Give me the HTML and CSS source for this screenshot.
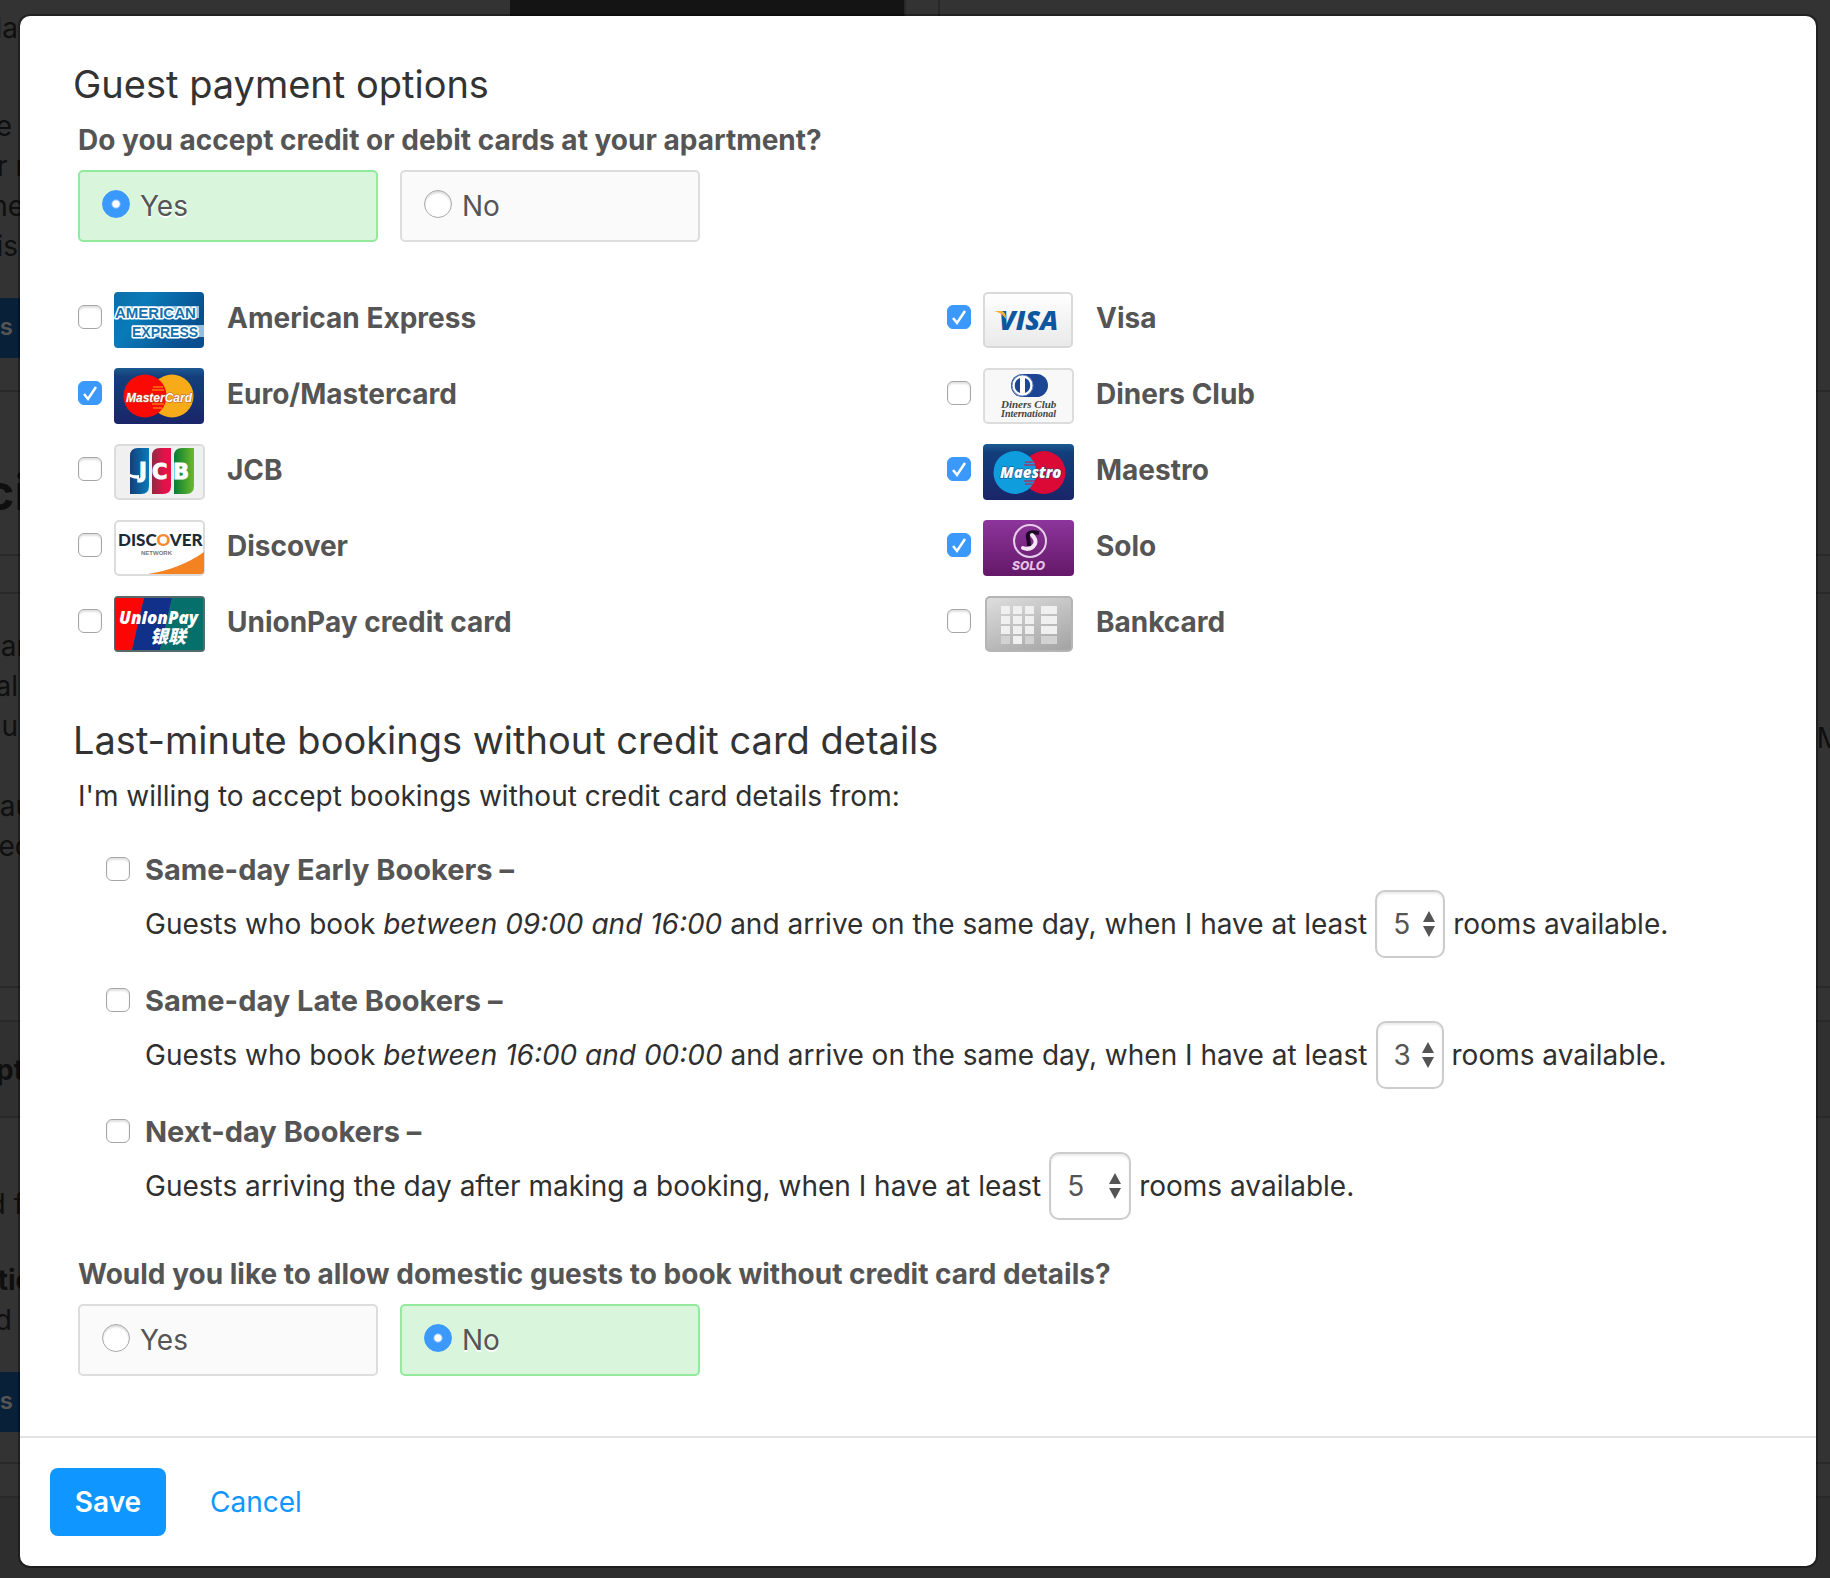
FILE: index.html
```html
<!DOCTYPE html>
<html lang="en">
<head>
<meta charset="utf-8">
<title>Guest payment options</title>
<link rel="stylesheet" href="styles.css">
</head>
<body>
<div class="page">
  <div class="backdrop" aria-hidden="true">
    <div class="topbar"></div>
    <div class="columns">
      <div class="column column-left"></div>
      <div class="column column-right"></div>
    </div>
    <div class="bands">
      <div class="band band-intro">
        <p class="peek peek-first">la</p>
        <p class="peek peek-end">e</p>
        <p class="peek peek-wide">r n</p>
        <p class="peek peek-far">ne</p>
        <p class="peek">is</p>
        <span class="peek-button">s</span>
      </div>
      <div class="band band-title"><p class="peek peek-large">ci</p></div>
      <div class="band band-gap"></div>
      <div class="band band-text">
        <p class="peek peek-widest">am</p>
        <p class="peek">al</p>
        <p class="peek peek-inset">u</p>
        <p class="peek peek-wide peek-para">au</p>
        <p class="peek peek-wide">ed</p>
        <span class="peek-right">M</span>
      </div>
      <div class="band band-gap-small"></div>
      <div class="band band-subtitle"><p class="peek peek-bold">pt</p></div>
      <div class="band band-form">
        <p class="peek peek-far">d f</p>
        <p class="peek peek-wide peek-option">tic</p>
        <p class="peek peek-end">d</p>
        <span class="peek-button">s</span>
      </div>
      <div class="band band-gap-small"></div>
      <div class="band band-last"></div>
    </div>
  </div>

  <form class="modal" role="dialog" aria-labelledby="dialog-title">
    <div class="modal-body">
      <h1 class="heading" id="dialog-title">Guest payment options</h1>
      <fieldset class="choice choice-accept">
        <legend class="question">Do you accept credit or debit cards at your apartment?</legend>
        <div class="choice-row">
          <label class="choice-box"><input class="radio" type="radio" name="accept" checked>Yes</label>
          <label class="choice-box"><input class="radio" type="radio" name="accept">No</label>
        </div>
      </fieldset>

      <div class="cards">
        <label class="card"><input class="check" type="checkbox">
          <svg class="card-logo" viewBox="0 0 90 56" aria-hidden="true">
            <defs><linearGradient id="amex" x1="0" y1="0" x2="1" y2="0.4"><stop offset="0" stop-color="#0d6fa8"/><stop offset=".35" stop-color="#0a7ab8"/><stop offset="1" stop-color="#074f8f"/></linearGradient></defs>
            <rect width="90" height="56" rx="4" fill="url(#amex)"/>
            <path d="M5 14h80v12H1z M18 33h72v12H18z" fill="#8fc1de"/>
            <g font-family="Liberation Sans" font-weight="700" font-size="15" fill="#1672ad" stroke="#fff" stroke-width="3" stroke-linejoin="round" paint-order="stroke"><text x="1" y="26">AMERICAN</text><text x="18" y="45" font-size="14">EXPRESS</text></g>
          </svg><span>American Express</span></label>
        <label class="card"><input class="check" type="checkbox" checked>
          <svg class="card-logo" viewBox="0 0 90 56" aria-hidden="true">
            <defs><linearGradient id="visa" x2="0" y2="1"><stop stop-color="#fff"/><stop offset="1" stop-color="#e9e9e9"/></linearGradient></defs>
            <rect x="1" y="1" width="88" height="54" rx="4" fill="url(#visa)" stroke="#d9d9d9" stroke-width="2"/>
            <text x="16" y="38" font-family="Open Sans" font-weight="800" font-style="italic" font-size="27" fill="#0d56a0">VISA</text>
            <path d="M11 19h8q4 1 4 8q-4-6-12-8z" fill="#f5b335"/>
          </svg><span>Visa</span></label>
        <label class="card"><input class="check" type="checkbox" checked>
          <svg class="card-logo" viewBox="0 0 90 56" aria-hidden="true">
            <defs><linearGradient id="navy" x2="0" y2="1"><stop stop-color="#1d5a92"/><stop offset=".15" stop-color="#123f7c"/><stop offset="1" stop-color="#1a2568"/></linearGradient></defs>
            <rect width="90" height="56" rx="4" fill="url(#navy)"/>
            <circle cx="58" cy="28" r="21.500" fill="#f8ab18"/><circle cx="31" cy="28" r="21.500" fill="#fb0a05"/>
            <path d="M39 19h10M38 22h12M38 36h12M39 40h9" stroke="#f8ab18" stroke-width="1"/>
            <text x="12" y="34" font-family="Liberation Sans" font-weight="700" font-style="italic" font-size="12" fill="#fff" stroke="#b55a38" stroke-width="1" paint-order="stroke">MasterCard</text>
          </svg><span>Euro/Mastercard</span></label>
        <label class="card"><input class="check" type="checkbox">
          <svg class="card-logo" viewBox="0 0 90 56" aria-hidden="true">
            <rect x="1" y="1" width="89" height="54" rx="4" fill="#f8f8f8" stroke="#dcdcdc" stroke-width="2"/>
            <rect x="28" y="6" width="37" height="23" rx="11.500" fill="#1c4594"/>
            <circle cx="39.500" cy="17.500" r="10.500" fill="#fff" stroke="#6e8bc0" stroke-width="1"/>
            <path d="M37 10a8 8 0 0 0 0 15zM42 10a8 8 0 0 1 0 15z" fill="#1c4594"/>
            <g font-family="Liberation Serif" font-style="italic" fill="#444"><text x="18" y="40" font-size="11">Diners Club</text><text x="18" y="49" font-size="10">International</text></g>
          </svg><span>Diners Club</span></label>
        <label class="card"><input class="check" type="checkbox">
          <svg class="card-logo" viewBox="0 0 90 56" aria-hidden="true">
            <defs>
              <linearGradient id="jb"><stop stop-color="#143f7c"/><stop offset="1" stop-color="#087cba"/></linearGradient>
              <linearGradient id="jr"><stop stop-color="#8e2a44"/><stop offset=".7" stop-color="#e8104a"/></linearGradient>
              <linearGradient id="jg"><stop stop-color="#077d33"/><stop offset="1" stop-color="#6dba2c"/></linearGradient>
            </defs>
            <rect x="1" y="1" width="89" height="54" rx="4" fill="#f0f0f0" stroke="#dcdcdc" stroke-width="2"/>
            <path d="M16 12q0-8 8-8h11v38q0 8-8 8H16z" fill="url(#jb)"/>
            <path d="M38 12q0-8 8-8h11v38q0 8-8 8H38z" fill="url(#jr)"/>
            <path d="M60 12q0-8 8-8h12v38q0 8-8 8H60z" fill="url(#jg)"/>
            <g font-family="DejaVu Sans" font-weight="700" font-size="21" fill="#fff" stroke="#fff" stroke-width="1"><text x="25" y="34">J</text><text x="38" y="35">C</text><text x="59" y="35">B</text></g>
            <path d="M16 30q5 2 9 1v4q-5 0-9-2z" fill="#fff"/>
          </svg><span>JCB</span></label>
        <label class="card"><input class="check" type="checkbox" checked>
          <svg class="card-logo" viewBox="0 0 90 56" aria-hidden="true">
            <rect width="91" height="56" rx="4" fill="url(#navy)"/>
            <circle cx="61" cy="28.500" r="21.500" fill="#dc0836"/><circle cx="32" cy="28.500" r="21.500" fill="#109ddd"/>
            <path d="M42 18h8M41 21h11M41 37h11M42 40h8" stroke="#dc0836" stroke-width="1"/>
            <text x="17" y="34" font-family="Open Sans" font-weight="800" font-style="italic" font-size="15" fill="#fff" stroke="#1d4a7a" stroke-width="1" paint-order="stroke">Maestro</text>
          </svg><span>Maestro</span></label>
        <label class="card"><input class="check" type="checkbox">
          <svg class="card-logo" viewBox="0 0 90 56" aria-hidden="true">
            <rect x="1" y="1" width="89" height="54" rx="4" fill="#fff" stroke="#dcdcdc" stroke-width="2"/>
            <path d="M34 54Q66 49 90 32v19q0 3-3 3z" fill="#f58220"/>
            <text x="4" y="26" font-family="Lato" font-weight="900" font-size="17" fill="#1b2b35">DISC<tspan fill="#f58b32">O</tspan>VER</text>
            <text x="27" y="35" font-family="Liberation Sans" font-weight="700" font-size="6" fill="#777">NETWORK</text>
          </svg><span>Discover</span></label>
        <label class="card"><input class="check" type="checkbox" checked>
          <svg class="card-logo" viewBox="0 0 90 56" aria-hidden="true">
            <defs><linearGradient id="solo" x2="0" y2="1"><stop stop-color="#8d359c"/><stop offset="1" stop-color="#641868"/></linearGradient></defs>
            <rect width="91" height="56" rx="4" fill="url(#solo)"/>
            <circle cx="47" cy="21" r="16" fill="none" stroke="#e6cdea" stroke-width="2"/>
            <path d="M56 13q-13-3-11 5q1 4 1 8" fill="none" stroke="#1f0825" stroke-width="4"/>
            <path d="M49 15q5 5 3 9q-4 7-12 4" fill="none" stroke="#f4e6f5" stroke-width="4" stroke-linecap="round"/>
            <text x="29" y="50" font-family="Inter" font-weight="800" font-style="italic" font-size="12" fill="#e3c4e6">SOLO</text>
          </svg><span>Solo</span></label>
        <label class="card"><input class="check" type="checkbox">
          <svg class="card-logo" viewBox="0 0 90 56" aria-hidden="true">
            <clipPath id="upc"><rect x="1" y="1" width="89" height="54" rx="4"/></clipPath>
            <rect width="91" height="56" rx="4" fill="#56696b"/>
            <g clip-path="url(#upc)"><path d="M1 2h29L18 54H1z" fill="#fb0505"/><path d="M30 2h28L46 54H18z" fill="#10308a"/><path d="M58 2h31v52H46z" fill="#046f6b"/></g>
            <text x="5" y="28" font-family="Open Sans" font-weight="800" font-style="italic" font-size="17" fill="#fff">UnionPay</text>
            <text x="36" y="47" font-family="Noto Sans CJK SC" font-weight="900" font-style="italic" font-size="18" fill="#fff">银联</text>
          </svg><span>UnionPay credit card</span></label>
        <label class="card"><input class="check" type="checkbox">
          <svg class="card-logo" viewBox="0 0 90 56" aria-hidden="true">
            <defs><linearGradient id="bank" x1=".2" y1="0" x2=".8" y2="1"><stop stop-color="#dadada"/><stop offset="1" stop-color="#a6a6a6"/></linearGradient></defs>
            <rect x="3" y="1" width="86" height="54" rx="4" fill="url(#bank)" stroke="#b5b5b5" stroke-width="2"/>
            <path d="M18 10h9v8h-9zM30 10h9v8h-9zM42 10h9v8h-9zM58 10h16v8H58zM18 20h9v8h-9zM30 20h9v8h-9zM42 20h9v8h-9zM58 20h16v8H58zM18 30h9v8h-9zM30 30h9v8h-9zM42 30h9v8h-9zM58 30h16v8H58zM30 40h9v8h-9z" fill="#f0f0f0"/>
            <path d="M18 40h9v8h-9zM42 40h9v8h-9zM58 40h16v8H58z" fill="#d2d2d2"/>
          </svg><span>Bankcard</span></label>
      </div>

      <h2 class="heading">Last-minute bookings without credit card details</h2>
      <p class="lead">I'm willing to accept bookings without credit card details from:</p>

      <div class="options">
        <div class="option">
          <label class="option-name"><input class="check" type="checkbox">Same-day Early Bookers –</label>
          <div class="option-text">
            <label for="early">Guests who book <em>between 09:00 and 16:00</em> and arrive on the same day, when I have at least</label>
            <span class="picker"><select class="select select-medium" id="early"><option>5</option></select><svg class="arrows" viewBox="0 0 12 26" aria-hidden="true"><path d="M6 0l6 11H0zM6 26l6-11H0z"/></svg></span>
            <span>rooms available.</span>
          </div>
        </div>
        <div class="option">
          <label class="option-name"><input class="check" type="checkbox">Same-day Late Bookers –</label>
          <div class="option-text">
            <label for="late">Guests who book <em>between 16:00 and 00:00</em> and arrive on the same day, when I have at least</label>
            <span class="picker"><select class="select select-small" id="late"><option>3</option></select><svg class="arrows" viewBox="0 0 12 26" aria-hidden="true"><path d="M6 0l6 11H0zM6 26l6-11H0z"/></svg></span>
            <span>rooms available.</span>
          </div>
        </div>
        <div class="option">
          <label class="option-name"><input class="check" type="checkbox">Next-day Bookers –</label>
          <div class="option-text">
            <label for="next">Guests arriving the day after making a booking, when I have at least</label>
            <span class="picker"><select class="select select-large" id="next"><option>5</option></select><svg class="arrows" viewBox="0 0 12 26" aria-hidden="true"><path d="M6 0l6 11H0zM6 26l6-11H0z"/></svg></span>
            <span>rooms available.</span>
          </div>
        </div>
      </div>

      <fieldset class="choice">
        <legend class="question">Would you like to allow domestic guests to book without credit card details?</legend>
        <div class="choice-row">
          <label class="choice-box"><input class="radio" type="radio" name="domestic">Yes</label>
          <label class="choice-box"><input class="radio" type="radio" name="domestic" checked>No</label>
        </div>
      </fieldset>
    </div>
    <div class="modal-footer">
      <button class="save" type="button">Save</button>
      <a class="cancel" href="#">Cancel</a>
    </div>
  </form>
</div>
</body>
</html>
```
FILE: styles.css
```css
* { box-sizing: border-box; }
body {
  margin: 0;
  background: #333;
  color: #2f2f2f;
  font-family: Inter, "Liberation Sans", sans-serif;
  font-size: 28px;
  line-height: 36px;
}
h1, h2, p, fieldset { margin: 0; padding: 0; border: 0; }
legend { padding: 0; }
.page { position: relative; padding: 16px 14px 12px 20px; }

/* Dimmed page behind the dialog */
.backdrop { position: absolute; inset: 0; overflow: hidden; color: #0f0f0f; }
.columns { position: absolute; inset: 0; display: grid; grid-template-columns: 906px 1fr; gap: 32px; }
.column-left { border-right: 2px solid #282828; }
.column-right { border-left: 2px solid #282828; }
.topbar { position: absolute; left: 510px; top: 0; width: 394px; height: 40px; background: #141414; }
.bands { position: relative; }
.band { position: relative; border-bottom: 2px solid #292929; }
.band-intro { height: 392px; padding-top: 8px; }
.band-title { height: 164px; padding-top: 80px; }
.band-gap { height: 38px; }
.band-text { height: 394px; padding-top: 32px; }
.band-gap-small { height: 34px; }
.band-subtitle { height: 96px; padding-top: 28px; background: #303030; }
.band-form { height: 346px; padding-top: 66px; }
.band-last { height: 90px; background: #2e2e2e; }
.peek { width: 18px; display: flex; justify-content: flex-end; line-height: 40px; white-space: pre; }
.peek-first { margin-bottom: 58px; }
.peek-end { width: 12px; }
.peek-far { width: 24px; }
.peek-wide { width: 32px; }
.peek-widest { width: 41px; }
.peek-inset { width: 18px; }
.peek-para { margin-top: 40px; }
.peek-bold { width: 24px; font-weight: 700; }
.peek-option { margin-top: 36px; font-weight: 700; }
.peek-large { width: 28px; font-size: 50px; font-weight: 700; }
.peek-button { display: flex; justify-content: flex-end; width: 20px; height: 60px; margin-top: 32px; padding-right: 7px; line-height: 58px; font-weight: 600; font-size: 24px; color: #545454; background: #082038; }
.peek-right { position: absolute; right: -12px; top: 126px; }

/* Dialog */
.modal { position: relative; background: #fff; border-radius: 10px; box-shadow: 0 0 0 2px rgba(0, 0, 0, .35); }
.modal-body { padding: 44px 0 60px 58px; }
.heading { margin-left: -5px; font-size: 38px; line-height: 48px; font-weight: 400; color: #333; }
.question { font-weight: 700; color: #555; }
.choice-accept { margin-top: 14px; }
.choice-row { display: flex; gap: 22px; margin-top: 12px; }
.choice-box {
  display: flex; align-items: center; gap: 10px; width: 300px; height: 72px; padding: 0 22px;
  border: 2px solid #ddd; border-radius: 5px; background: #fafafa; color: #555; text-shadow: 0 2px 0 #fff;
}
.choice-box:has(:checked) { border-color: #93e99c; background: #d9f6dc; }
.radio {
  appearance: none; width: 28px; height: 28px; margin: 0 0 4px; border: 1px solid #a9a9a9; border-radius: 50%;
  background: #fff; box-shadow: inset 0 2px 2px rgba(0, 0, 0, .15);
}
.radio:checked { border-color: #3b99fc; background: radial-gradient(circle, #fff 3px, #3b99fc 5px); box-shadow: none; }
.check {
  appearance: none; flex: none; width: 24px; height: 24px; margin: 0; border: 1px solid #a6a6a6; border-radius: 6px;
  background: #fff; box-shadow: inset 0 2px 2px rgba(0, 0, 0, .12);
}
.check:checked {
  border-color: #3b99fc; box-shadow: none;
  background: #3b99fc url("data:image/svg+xml,%3Csvg xmlns='http://www.w3.org/2000/svg' viewBox='0 0 22 22'%3E%3Cpath d='M5 12l4 5 8-12' fill='none' stroke='white' stroke-width='2.500'/%3E%3C/svg%3E") center / 22px 22px no-repeat;
}
.cards { display: grid; grid-template-columns: 1fr 1fr; row-gap: 20px; margin: 50px 0 64px; }
.card { display: flex; align-items: center; height: 56px; font-weight: 700; color: #555; }
.card .check { margin: 0 12px 6px 0; }
.card-logo { flex: none; width: 90px; height: 56px; margin-right: 23px; overflow: visible; }
.card span { margin-bottom: 4px; }
.lead { margin-top: 14px; }
.options { display: flex; flex-direction: column; gap: 25px; margin: 38px 0 36px; padding-left: 28px; }
.option-name { display: flex; align-items: center; gap: 15px; font-size: 29px; font-weight: 700; color: #555; }
.option-name .check { margin-bottom: 2px; }
.option-text { display: flex; align-items: center; gap: 8px; margin-top: 2px; padding-left: 39px; }
.picker { position: relative; display: flex; }
.select {
  appearance: none; height: 68px; padding: 0 16px; border: 2px solid #ccc; border-radius: 10px; background: #fff;
  box-shadow: inset 0 2px 2px rgba(0, 0, 0, .08); font: inherit; color: #555;
}
.select-small { width: 68px; }
.select-medium { width: 70px; }
.select-large { width: 82px; }
.arrows { position: absolute; right: 10px; top: 21px; width: 12px; height: 26px; fill: #555; pointer-events: none; }
.modal-footer { display: flex; align-items: center; gap: 44px; padding: 30px; border-top: 2px solid #e3e3e3; }
.save { width: 116px; height: 68px; border: 0; border-radius: 8px; background: #0f97ff; color: #fff; font: inherit; font-weight: 600; }
.cancel { color: #0f97ff; text-decoration: none; }
```
